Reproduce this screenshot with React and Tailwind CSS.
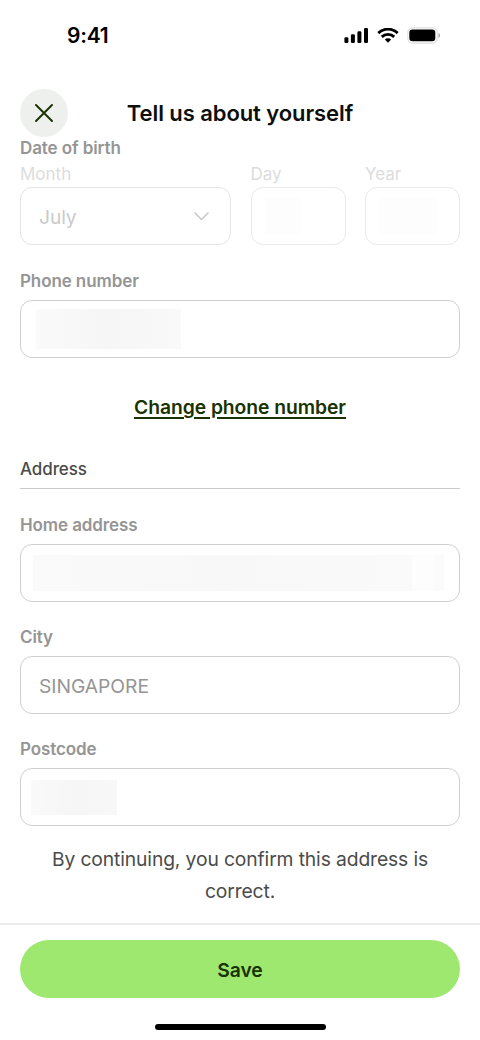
const SignalIcon = () => (
  <svg width="24" height="15" viewBox="0 0 24 15" fill="black">
    <rect x="0.4" y="9.300" width="4" height="5.700" rx="1.3" />
    <rect x="6.9" y="6.300" width="4" height="8.700" rx="1.3" />
    <rect x="13.400" y="3.300" width="4" height="11.700" rx="1.3" />
    <rect x="20" y="0" width="4" height="15" rx="1.3" />
  </svg>
);

const WifiIcon = () => (
  <svg width="22" height="15" viewBox="0 0 22 15" fill="none" stroke="black" strokeWidth="2.9">
    <path d="M1.3 5.1a13.9 13.9 0 0 1 19.4 0" />
    <path d="M4.8 8.9a8.8 8.8 0 0 1 12.4 0" />
    <path d="M11 14.8 7.8 11.6a4.6 4.6 0 0 1 6.4 0z" fill="black" stroke="none" />
  </svg>
);

const BatteryIcon = () => (
  <svg width="34" height="17" viewBox="0 0 34 17">
    <rect x="0.75" y="0.75" width="29.5" height="15.5" rx="5" fill="none" stroke="#e4e4e4" strokeWidth="1.3" />
    <rect x="2.3" y="2.6" width="26" height="11.6" rx="3.2" fill="black" />
    <path d="M31.5 6v5c1-.4 1.5-1.300 1.500-2.500s-.5-2.100-1.500-2.500z" fill="#a5a5a5" />
  </svg>
);

const Label = ({ children }) => (
  <p className="pt-px text-[17px] leading-5 font-semibold tracking-[-0.1px] text-[#959595]">{children}</p>
);

const Box = ({ className = '', children }) => (
  <div className={`h-[58px] rounded-xl border flex items-center ${className}`}>{children}</div>
);

export default function App() {
  return (
    <div className="w-[480px] h-[1040px] bg-white overflow-hidden flex flex-col font-['Inter','Liberation_Sans',sans-serif]">
      <div className="h-[89px] shrink-0 flex items-start justify-between pl-[67px] pr-[39px] pt-[24px]">
        <span className="text-[21px] leading-6 font-semibold text-black tracking-[-0.2px]">9:41</span>
        <div className="flex items-center pt-[3px]">
          <SignalIcon />
          <span className="ml-[9px]"><WifiIcon /></span>
          <span className="ml-[8px]"><BatteryIcon /></span>
        </div>
      </div>

      <header className="h-12 shrink-0 px-5 grid grid-cols-[48px_1fr_48px] items-center">
        <button className="w-12 h-12 rounded-full bg-[#eef0ee] flex items-center justify-center">
          <svg width="18" height="18" viewBox="0 0 18 18" fill="none" stroke="#183300" strokeWidth="1.9" strokeLinecap="round">
            <path d="M1 1l16 16M17 1 1 17" />
          </svg>
        </button>
        <h1 className="text-center text-[22px] leading-7 font-semibold tracking-[-0.08px] text-[#0e0f0c] whitespace-nowrap">Tell us about yourself</h1>
      </header>

      <main className="px-5 flex-1 flex flex-col">
        <Label>Date of birth</Label>
        <div className="mt-[6px] grid grid-cols-[211px_95px_95px] justify-between text-[17px] leading-5 text-[#dcdcdc]">
          <span>Month</span>
          <span>Day</span>
          <span>Year</span>
        </div>
        <div className="mt-[3px] grid grid-cols-[211px_95px_95px] justify-between">
          <Box className="border-[#e5e5e5] justify-between pl-[18px] pr-[21px]">
            <span className="pt-0.5 text-[19.3px] tracking-[-0.1px] text-[#cacaca]">July</span>
            <svg width="15" height="9" viewBox="0 0 15 9" fill="none" stroke="#cacaca" strokeWidth="1.7" strokeLinecap="round" strokeLinejoin="round">
              <path d="M1 1l6.500 6.500L14 1" />
            </svg>
          </Box>
          <Box className="border-[#e9e9e9] pl-[13px]">
            <div className="w-9 h-9 bg-[#fdfdfd]" />
          </Box>
          <Box className="border-[#e9e9e9] pl-[13px]">
            <div className="w-[58px] h-9 bg-[#fdfdfd]" />
          </Box>
        </div>

        <div className="mt-[25px]"><Label>Phone number</Label></div>
        <Box className="mt-[9px] border-[#cfcfcf] pl-[15px]">
          <div className="w-[145px] h-10 bg-linear-to-r from-[#fafafa] via-[#f6f6f6] to-[#f9f9f9]" />
        </Box>

        <a className="mt-[37px] self-center text-[19.3px] leading-6 font-semibold tracking-[-0.05px] text-[#183300] underline decoration-[1.5px] underline-offset-[3px]">Change phone number</a>

        <h2 className="mt-[39px] pt-px pb-[9px] border-b border-[#cacaca] text-[17px] leading-5 font-medium tracking-[-0.1px] text-[#4a4b49]">Address</h2>

        <div className="mt-[25px]"><Label>Home address</Label></div>
        <Box className="mt-[9px] border-[#cfcfcf] pl-3">
          <div className="w-[379px] h-9 bg-linear-to-r from-[#fafafa] via-[#f8f8f8] to-[#fafafa]" />
          <div className="w-[22px] h-9 bg-[#fdfdfd]" />
          <div className="w-[10px] h-9 bg-[#fbfbfb]" />
        </Box>

        <div className="mt-[24px]"><Label>City</Label></div>
        <Box className="mt-[9px] border-[#cfcfcf] pl-[18px]">
          <span className="pt-0.5 text-[19.3px] tracking-[-0.05px] text-[#959595]">SINGAPORE</span>
        </Box>

        <div className="mt-[24px]"><Label>Postcode</Label></div>
        <Box className="mt-[9px] border-[#cfcfcf] pl-[10px]">
          <div className="w-[86px] h-[35px] mt-px bg-linear-to-r from-[#fafafa] via-[#f6f6f6] to-[#f8f8f8]" />
        </Box>

        <p className="mt-[17px] px-6 text-center text-[19.3px] leading-8 tracking-[-0.12px] text-[#4a4b49]">
          By continuing, you confirm this address is correct.
        </p>
      </main>

      <footer className="h-[117px] shrink-0 border-t-2 border-[#ebebeb] px-5 pt-[15px] flex flex-col items-center">
        <button className="w-full h-[58px] shrink-0 rounded-full bg-[#9fe870] pt-0.5 text-[19.3px] font-semibold tracking-[-0.1px] text-[#183300]">Save</button>
        <div className="mt-[26px] w-[171px] h-[6px] shrink-0 rounded-full bg-black" />
      </footer>
    </div>
  );
}
